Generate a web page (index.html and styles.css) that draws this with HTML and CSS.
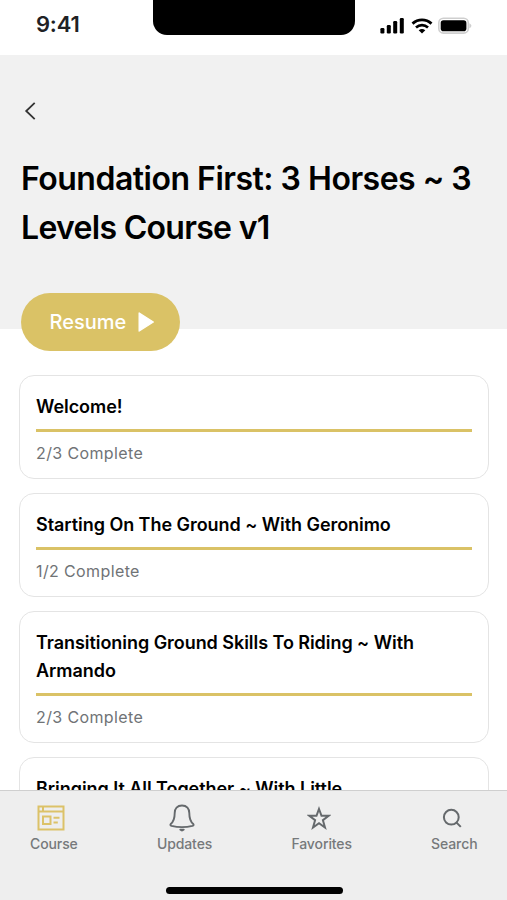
FILE: index.html
```html
<!DOCTYPE html>
<html lang="en">
<head>
    <meta charset="UTF-8">
    <meta name="viewport" content="width=device-width, initial-scale=1.0">
    <title>Course</title>
    <link rel="stylesheet" href="styles.css">
</head>
<body>
    <div class="status-bar">
        <span class="time">9:41</span>
        <div class="notch"></div>
        <div class="status-icons">
            <svg width="25" height="17" viewBox="0 0 25 17">
                <rect x="0.4" y="11" width="4" height="5.5" rx="1.2"/>
                <rect x="6.8" y="8" width="4" height="8.5" rx="1.2"/>
                <rect x="13.2" y="4" width="4" height="12.5" rx="1.2"/>
                <rect x="19.8" y="1" width="4" height="15.5" rx="1.2"/>
            </svg>
            <svg width="22" height="16" viewBox="0 0 22 16">
                <path d="M1.5 5.6C7 .6 15 .6 20.5 5.6" fill="none" stroke="#000" stroke-width="2.8"/>
                <path d="M5 9.5C8.5 6.4 13.5 6.4 17 9.5" fill="none" stroke="#000" stroke-width="2.7"/>
                <path d="M7.7 12.2Q11 9.9 14.3 12.2L11 15.6Z"/>
            </svg>
            <svg width="34" height="17" viewBox="0 0 34 17">
                <rect x="0.8" y="1.3" width="29.5" height="14.8" rx="4.6" fill="#fff" stroke="#cfcfcf" stroke-width="1.6"/>
                <rect x="2.7" y="3.2" width="25.7" height="11" rx="2.8"/>
                <path d="M31.4 6.2Q33.4 7.2 33.4 8.7Q33.4 10.2 31.4 11.2Z" fill="#cfcfcf"/>
            </svg>
        </div>
    </div>

    <header class="hero">
        <a class="back" href="#" aria-label="Back">
            <svg width="12" height="20" viewBox="0 0 12 20">
                <path d="M10.7 1.8L2.2 10L10.7 18.2" fill="none" stroke="#333" stroke-width="1.8"/>
            </svg>
        </a>
        <h1>Foundation First: 3 Horses ~ 3<br><span class="title-end">Levels Course v1</span></h1>
        <button class="resume">
            <span>Resume</span>
            <svg width="17" height="20" viewBox="0 0 17 20">
                <path d="M1.2 1L15.3 10L1.2 19Z" fill="#fff" stroke="#fff" stroke-width="1.4" stroke-linejoin="round"/>
            </svg>
        </button>
    </header>

    <main class="lessons">
        <div class="card">
            <h2>Welcome!</h2>
            <div class="progress"></div>
            <p>2/3 Complete</p>
        </div>
        <div class="card">
            <h2>Starting On The Ground ~ With Geronimo</h2>
            <div class="progress"></div>
            <p>1/2 Complete</p>
        </div>
        <div class="card">
            <h2>Transitioning Ground Skills To Riding ~ With Armando</h2>
            <div class="progress"></div>
            <p>2/3 Complete</p>
        </div>
        <div class="card">
            <h2>Bringing It All Together ~ With Little</h2>
            <div class="progress"></div>
        </div>
    </main>

    <nav class="tab-bar">
        <div class="tabs">
            <a class="tab" href="#">
                <svg width="28" height="28" viewBox="0 0 28 28" fill="none" stroke="#dcc268" stroke-width="2">
                    <rect x="1.5" y="2.5" width="25" height="23"/>
                    <path d="M1.5 7.5H26.5M6 3V7"/>
                    <rect x="6" y="12.5" width="7.5" height="7.5"/>
                    <path d="M16.5 13.7H22.5M16.5 18.5H20.8"/>
                </svg>
                <span>Course</span>
            </a>
            <a class="tab" href="#">
                <svg width="26" height="28" viewBox="0 0 26 28" fill="none" stroke="#65696c" stroke-width="1.9" stroke-linecap="round" stroke-linejoin="round">
                    <path d="M13 1.5C8.200 1.500 5.700 4.700 5.700 9C5.700 15.500 4.600 17.700 1.700 20Q.8 21.200 2.500 21.800Q13 24.400 23.500 21.800Q25.200 21.200 24.300 20C21.400 17.700 20.300 15.500 20.300 9C20.300 4.700 17.800 1.500 13 1.500Z"/>
                    <path d="M11.3 25.6Q13 27.200 14.7 25.6Z" fill="#65696c"/>
                </svg>
                <span>Updates</span>
            </a>
            <a class="tab" href="#">
                <svg width="24" height="28" viewBox="0 0 24 28" fill="none" stroke="#65696c" stroke-width="2">
                    <path d="M12 5L14.500 11.800H21.600L15.900 16.200L18 23.500L12 19.300L6 23.500L8.100 16.200L2.400 11.800H9.500Z"/>
                </svg>
                <span>Favorites</span>
            </a>
            <a class="tab" href="#">
                <svg width="20" height="28" viewBox="0 0 20 28" fill="none" stroke="#65696c" stroke-width="2">
                    <circle cx="9.3" cy="13.2" r="7.4"/>
                    <path d="M14.3 18.4L18.8 22.9"/>
                </svg>
                <span>Search</span>
            </a>
        </div>
        <div class="home-indicator"></div>
    </nav>
</body>
</html>
```

FILE: styles.css
```css
* {
    box-sizing: border-box;
}
body {
    margin: 0;
    height: 900px;
    display: flex;
    flex-direction: column;
    overflow: hidden;
    background-color: #fff;
    font-family: Inter, "Liberation Sans", sans-serif;
    color: #000;
}
h1, h2, p {
    margin: 0;
}
a {
    color: inherit;
    text-decoration: none;
}
svg {
    display: block;
    flex: none;
}

/* status bar */
.status-bar {
    height: 55px;
    flex: none;
    display: grid;
    grid-template-columns: 153px 202px 1fr;
    align-items: start;
}
.time {
    padding: 10px 0 0 36px;
    font-size: 22px;
    line-height: 28px;
    font-weight: 600;
    letter-spacing: -0.2px;
    color: #202124;
}
.notch {
    height: 35px;
    background-color: #000;
    border-radius: 0 0 14px 14px;
}
.status-icons {
    display: flex;
    align-items: center;
    gap: 5.5px;
    padding: 17px 0 0 25px;
}

/* course header */
.hero {
    height: 274px;
    flex: none;
    padding: 46px 20px 0 21px;
    background-color: #f1f1f1;
}
.back {
    display: block;
    margin-left: 3px;
}
h1 {
    margin-top: 33px;
    font-size: 32px;
    line-height: 49px;
    font-weight: 600;
    letter-spacing: -0.5px;
    white-space: nowrap;
}
.title-end {
    letter-spacing: -0.7px;
}
.resume {
    margin-top: 41px;
    width: 159px;
    height: 58px;
    margin-left: -0.5px;
    padding: 0 0 0 29px;
    display: flex;
    align-items: center;
    gap: 12px;
    border: none;
    border-radius: 29px;
    background-color: #dac266;
    color: #fff;
    font-family: inherit;
    font-size: 20px;
    font-weight: 500;
}

/* lesson cards */
.lessons {
    flex: 1;
    min-height: 0;
    overflow: hidden;
    padding: 45.5px 18px 0 19px;
    display: flex;
    flex-direction: column;
    gap: 14.2px;
}
.card {
    flex: none;
    padding: 17px 16px 12px;
    border: 1px solid #e4e4e4;
    border-radius: 15px;
    background-color: #fff;
}
.card h2 {
    font-size: 18px;
    line-height: 28px;
    font-weight: 600;
    letter-spacing: -0.05px;
}
.progress {
    height: 3px;
    margin: 8px 0;
    background-color: #dac266;
}
.card p {
    font-size: 16px;
    line-height: 26px;
    letter-spacing: 0.38px;
    color: #707376;
}

/* bottom tabs */
.tab-bar {
    height: 110px;
    flex: none;
    display: flex;
    flex-direction: column;
    align-items: center;
    border-top: 1px solid #cfcfcf;
    background-color: #eee;
}
.tabs {
    width: 100%;
    display: flex;
    justify-content: space-between;
    padding: 13px 29.5px 0 30px;
}
.tab {
    display: flex;
    flex-direction: column;
    align-items: center;
    gap: 2px;
    color: #76797b;
    font-size: 14px;
    line-height: 20px;
    font-weight: 500;
    letter-spacing: -0.1px;
}
.tab svg {
    margin-right: 5px;
}
.home-indicator {
    width: 177px;
    height: 7px;
    margin: 33px 0 0 1px;
    border-radius: 4px;
    background-color: #000;
}
```
